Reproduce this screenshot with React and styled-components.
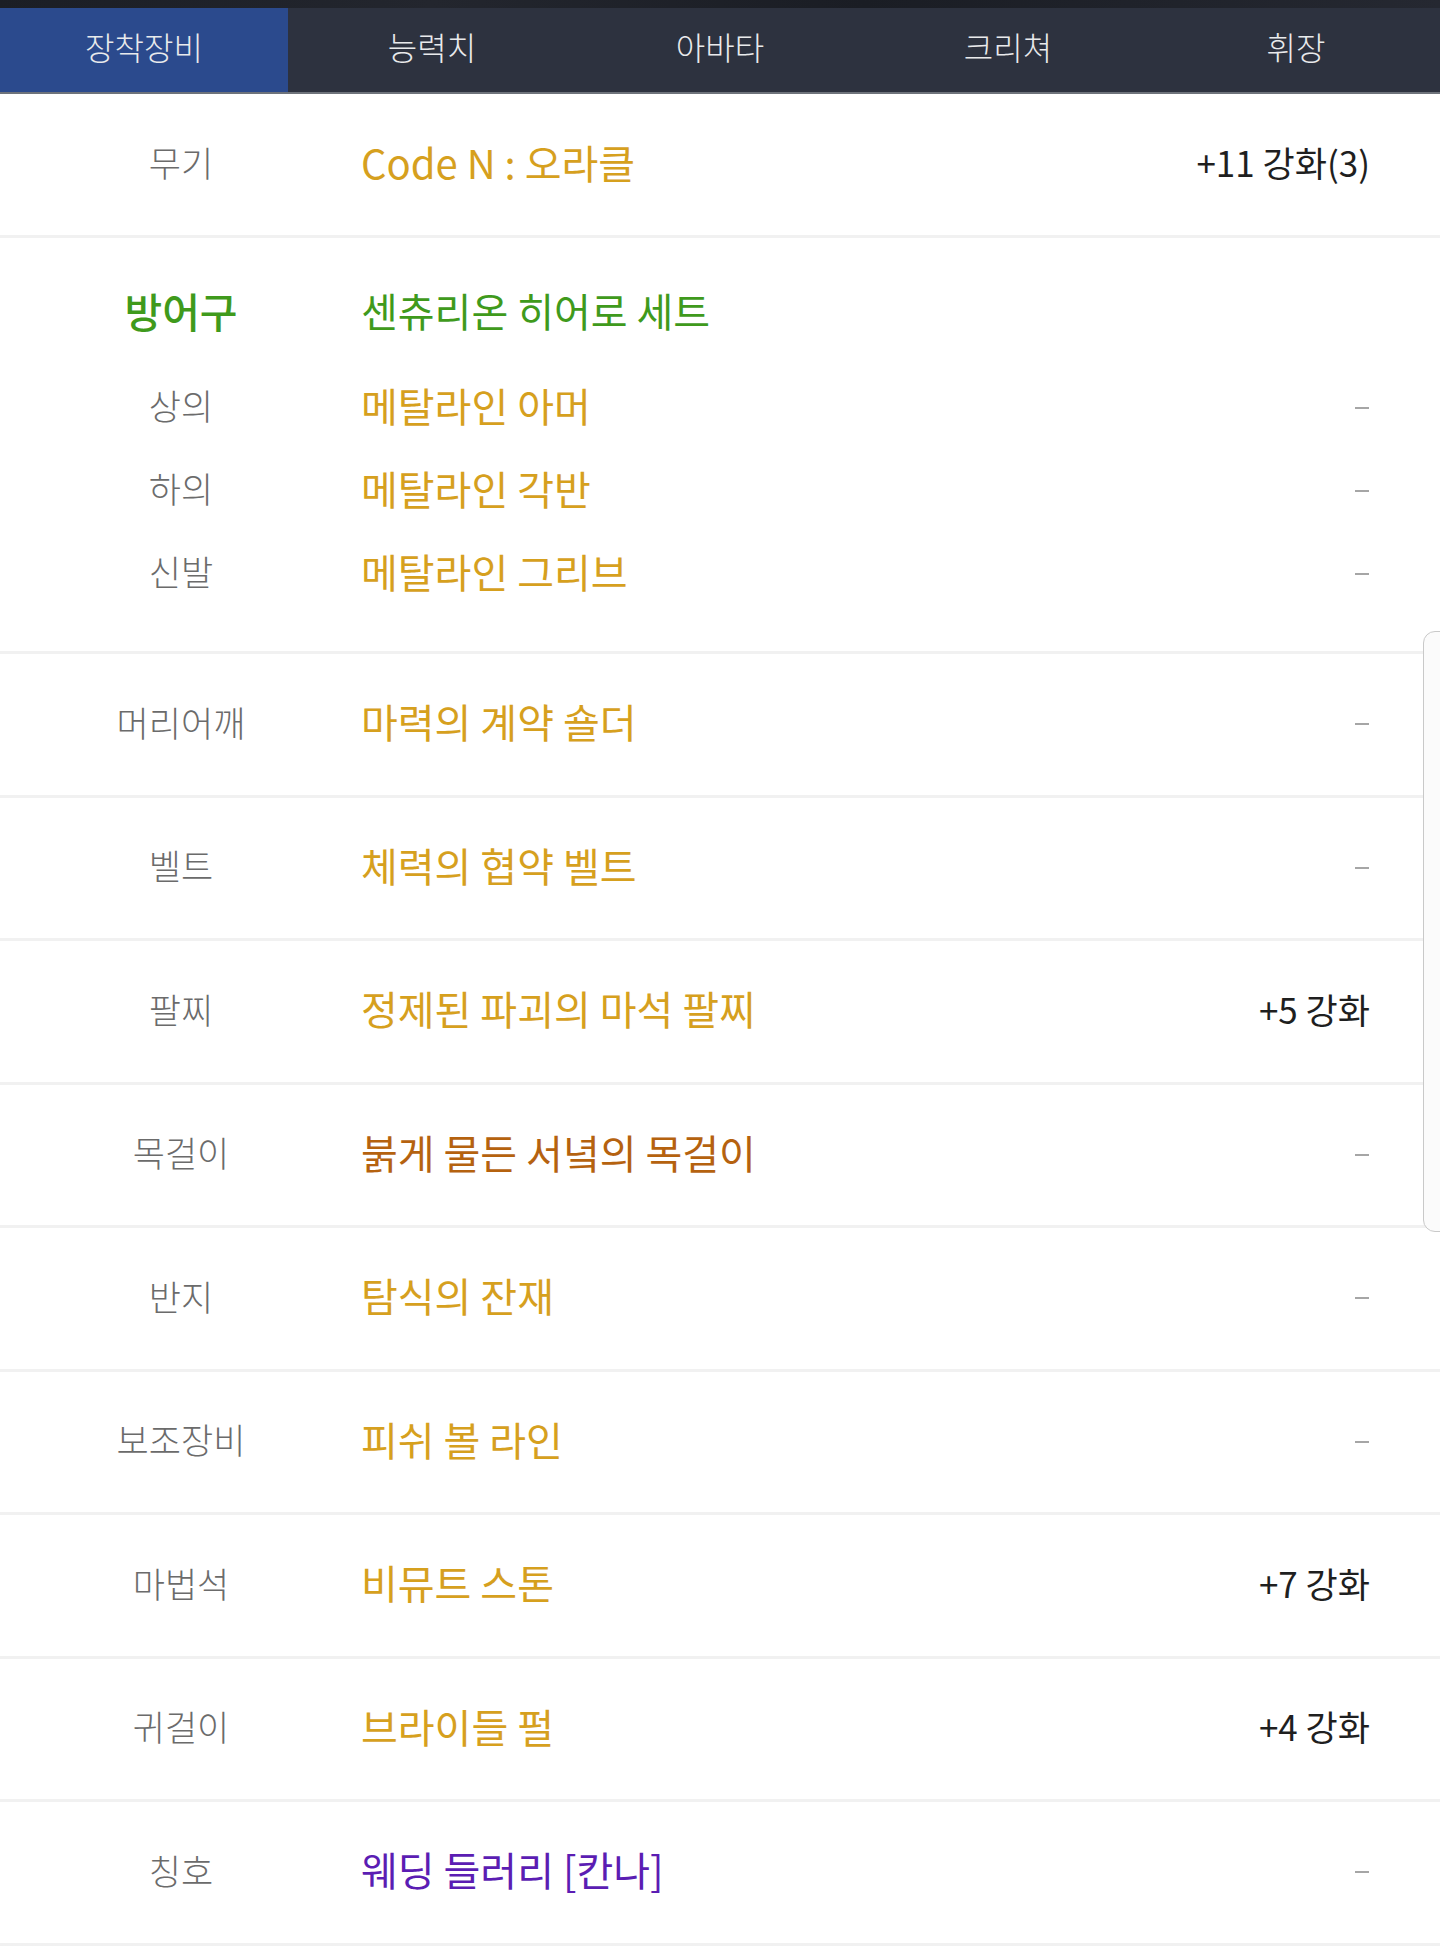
import React from 'react';
import styled, { createGlobalStyle } from 'styled-components';

const GlobalStyle = createGlobalStyle`
  html, body {
    margin: 0;
    padding: 0;
    background: #ffffff;
  }
  body {
    font-family: "Noto Sans CJK KR", "Noto Sans", sans-serif;
    -webkit-font-smoothing: antialiased;
  }
`;

const Page = styled.div`
  width: 1440px;
  min-height: 1958px;
  position: relative;
  overflow: hidden;
  background: #fff;
`;

const TopStrip = styled.div`
  height: 8px;
  background: linear-gradient(90deg, #1b1e25 0%, #23262e 30%, #1a1d24 60%, #252831 100%);
`;

const TabBar = styled.nav`
  display: grid;
  grid-template-columns: repeat(5, 1fr);
  height: 84px;
  background: #2d323f;
  border-bottom: 2px solid #6e737b;
`;

const Tab = styled.div`
  display: flex;
  align-items: center;
  justify-content: center;
  padding-bottom: 8px;
  font-size: 32px;
  font-weight: 300;
  color: #e9eaec;
  background: ${({ $active }) => ($active ? '#2b4a8d' : 'transparent')};
`;

const Row = styled.div`
  display: grid;
  grid-template-columns: 358px 1fr auto;
  align-items: center;
  height: ${({ $h }) => $h}px;
  box-sizing: border-box;
  padding: 0 70px 6px 0;
  border-bottom: 3px solid #f1f1f1;
`;

const Group = styled.div`
  padding: 33px 70px 36px 0;
  border-bottom: 3px solid #f1f1f1;
`;

const GroupLine = styled.div`
  display: grid;
  grid-template-columns: 358px 1fr auto;
  align-items: center;
  height: 83px;
  box-sizing: border-box;
  padding-bottom: 6px;
  margin-bottom: ${({ $after }) => $after || 0}px;
`;

const Label = styled.div`
  text-align: center;
  font-size: ${({ $big }) => ($big ? 41 : 35)}px;
  font-weight: ${({ $big }) => ($big ? 500 : 300)};
  color: ${({ $color }) => $color || '#6b6b6b'};
  padding-left: 4px;
`;

const Name = styled.div`
  padding-left: 3px;
  font-size: 40px;
  font-weight: 400;
  color: ${({ $color }) => $color};
  white-space: nowrap;
`;

const Enhance = styled.div`
  font-size: 35px;
  font-weight: 400;
  color: #1f1f1f;
  white-space: nowrap;
`;

const Dash = styled.div`
  width: 14px;
  height: 2px;
  background: #a6a6a6;
  margin: 6px 1px 0 0;
`;

const SideHandle = styled.div`
  position: absolute;
  top: 631px;
  left: 1423px;
  width: 40px;
  height: 599px;
  border: 1.5px solid #c9c9c9;
  border-radius: 12px;
  background: #fbfbfb;
`;

const GOLD = '#d6a01e';
const GREEN = '#3f9a1c';
const BROWN = '#b5620f';
const PURPLE = '#5b1db3';

const tabs = ['장착장비', '능력치', '아바타', '크리쳐', '휘장'];

const items = [
  { label: '머리어깨', name: '마력의 계약 숄더', color: GOLD },
  { label: '벨트', name: '체력의 협약 벨트', color: GOLD },
  { label: '팔찌', name: '정제된 파괴의 마석 팔찌', color: GOLD, enh: '+5 강화' },
  { label: '목걸이', name: '붉게 물든 서녘의 목걸이', color: BROWN },
  { label: '반지', name: '탐식의 잔재', color: GOLD },
  { label: '보조장비', name: '피쉬 볼 라인', color: GOLD },
  { label: '마법석', name: '비뮤트 스톤', color: GOLD, enh: '+7 강화' },
  { label: '귀걸이', name: '브라이들 펄', color: GOLD, enh: '+4 강화' },
  { label: '칭호', name: '웨딩 들러리 [칸나]', color: PURPLE },
];

const armor = [
  { label: '상의', name: '메탈라인 아머' },
  { label: '하의', name: '메탈라인 각반' },
  { label: '신발', name: '메탈라인 그리브' },
];

const Right = ({ enh }) => (enh ? <Enhance>{enh}</Enhance> : <Dash />);

export default function App() {
  return (
    <>
      <GlobalStyle />
      <Page>
        <TopStrip />
        <TabBar>
          {tabs.map((t, i) => (
            <Tab key={t} $active={i === 0}>{t}</Tab>
          ))}
        </TabBar>

        <Row $h={144}>
          <Label>무기</Label>
          <Name $color={GOLD}>Code N : 오라클</Name>
          <Enhance>+11 강화(3)</Enhance>
        </Row>

        <Group>
          <GroupLine $after={12}>
            <Label $big $color={GREEN}>방어구</Label>
            <Name $color={GREEN}>센츄리온 히어로 세트</Name>
            <span />
          </GroupLine>
          {armor.map((a) => (
            <GroupLine key={a.label}>
              <Label>{a.label}</Label>
              <Name $color={GOLD}>{a.name}</Name>
              <Dash />
            </GroupLine>
          ))}
        </Group>

        {items.map((it) => (
          <Row key={it.label} $h={143.5}>
            <Label>{it.label}</Label>
            <Name $color={it.color}>{it.name}</Name>
            <Right enh={it.enh} />
          </Row>
        ))}

        <SideHandle />
      </Page>
    </>
  );
}
